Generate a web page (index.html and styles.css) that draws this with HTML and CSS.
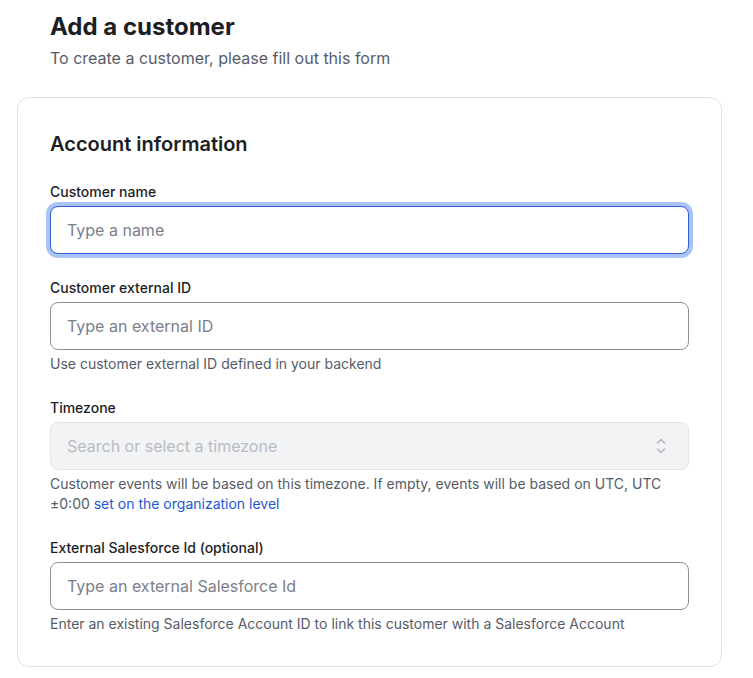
FILE: index.html
```html
<!DOCTYPE html>
<html lang="en">
<head>
<meta charset="utf-8">
<title>Add a customer</title>
<link rel="stylesheet" href="styles.css">
</head>
<body>
<main class="page">
  <header class="page-header">
    <h1 class="title">Add a customer</h1>
    <p class="subtitle">To create a customer, please fill out this form</p>
  </header>
  <section class="card">
    <h2 class="card-title">Account information</h2>
    <div class="fields">
      <div class="field">
        <label class="label" for="name">Customer name</label>
        <input class="input input-focus" id="name" type="text" placeholder="Type a name">
      </div>
      <div class="field">
        <label class="label" for="ext">Customer external ID</label>
        <input class="input" id="ext" type="text" placeholder="Type an external ID">
        <p class="help">Use customer external ID defined in your backend</p>
      </div>
      <div class="field">
        <label class="label">Timezone</label>
        <div class="select">
          <span class="select-placeholder">Search or select a timezone</span>
          <svg class="chevrons" width="12" height="20" viewBox="0 0 12 20" fill="none" stroke="currentColor" stroke-width="1.5" stroke-linecap="round" stroke-linejoin="round">
            <path d="M2.5 7 L6 3.5 L9.5 7"/>
            <path d="M2.5 13 L6 16.5 L9.5 13"/>
          </svg>
        </div>
        <p class="help">Customer events will be based on this timezone. If empty, events will be based on UTC, UTC ±0:00 <a class="link" href="#">set on the organization level</a></p>
      </div>
      <div class="field">
        <label class="label" for="sf">External Salesforce Id (optional)</label>
        <input class="input" id="sf" type="text" placeholder="Type an external Salesforce Id">
        <p class="help">Enter an existing Salesforce Account ID to link this customer with a Salesforce Account</p>
      </div>
    </div>
  </section>
</main>
</body>
</html>
```
FILE: styles.css
```css
* { box-sizing: border-box; }
html, body { margin: 0; padding: 0; background: #ffffff; }
body {
  font-family: Inter, "Noto Sans", "Liberation Sans", sans-serif;
  color: #1c1f24;
}
.page {
  padding: 11px 31px 0 17px;
}
.page-header {
  padding-left: 33px;
}
.title {
  margin: 0;
  font-size: 24px;
  line-height: 32px;
  font-weight: 700;
  color: #1b1e24;
}
.subtitle {
  margin: 3px 0 0;
  font-size: 16px;
  line-height: 24px;
  color: #555c68;
}
.card {
  margin-top: 27px;
  border: 1px solid #dfe1e5;
  border-radius: 12px;
  padding: 32px;
}
.card-title {
  margin: 0;
  font-size: 20px;
  line-height: 28px;
  font-weight: 600;
  color: #1b1e24;
}
.fields {
  margin-top: 24px;
  display: flex;
  flex-direction: column;
  gap: 24px;
}
.field {
  display: flex;
  flex-direction: column;
}
.label {
  font-size: 14px;
  line-height: 20px;
  font-weight: 500;
  color: #1b1e24;
  margin-bottom: 4px;
}
.input {
  height: 48px;
  width: 100%;
  border: 1px solid #8d9199;
  border-radius: 8px;
  padding: 0 16px;
  font-family: inherit;
  font-size: 16px;
  color: #1b1e24;
  background: #fff;
  outline: none;
}
.input::placeholder { color: #7a808b; }
.input-focus {
  border-color: #2f5ed6;
  box-shadow: 0 0 0 4px #a9c3f7;
}
.select {
  height: 48px;
  border: 1px solid #e3e5e9;
  border-radius: 8px;
  background: #f2f3f5;
  padding: 0 21px 0 16px;
  display: flex;
  align-items: center;
  justify-content: space-between;
}
.select-placeholder {
  font-size: 16px;
  color: #b7bbc3;
}
.chevrons { color: #b3b7be; }
.help {
  margin: 4px 0 0;
  font-size: 14px;
  line-height: 20px;
  color: #555c68;
}
.link {
  color: #2357d6;
  text-decoration: none;
}
```
